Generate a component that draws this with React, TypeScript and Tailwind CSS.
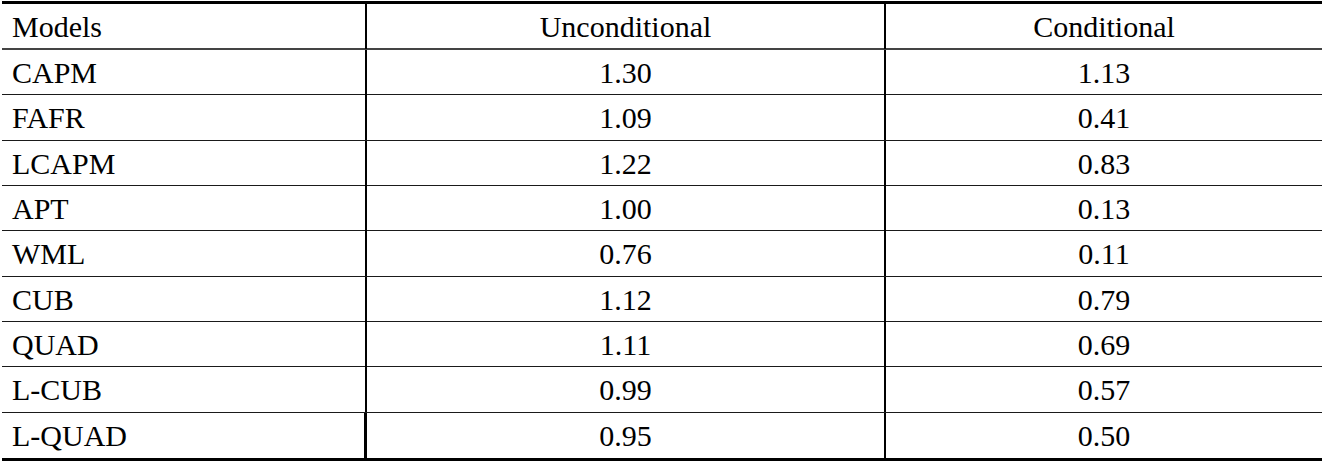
const rows: [string, string, string][] = [
  ['CAPM', '1.30', '1.13'],
  ['FAFR', '1.09', '0.41'],
  ['LCAPM', '1.22', '0.83'],
  ['APT', '1.00', '0.13'],
  ['WML', '0.76', '0.11'],
  ['CUB', '1.12', '0.79'],
  ['QUAD', '1.11', '0.69'],
  ['L-CUB', '0.99', '0.57'],
  ['L-QUAD', '0.95', '0.50'],
];

const App = () => {
  return (
    <div className="w-[1322px] h-[464px] bg-white pt-[1px] pl-[2px] font-['Liberation_Serif',serif] text-[30px] text-black">
      <div className="border-t-[3px] border-b-[3px] border-black">
        {/* header */}
        <div className="grid grid-cols-[365px_519px_1fr] h-[46px] border-b-2 border-[#444]">
          <div className="flex items-center pl-[10px] border-r-2 border-black">Models</div>
          <div className="flex items-center justify-center border-r-2 border-black">Unconditional</div>
          <div className="flex items-center justify-center">Conditional</div>
        </div>

        {rows.map(([model, uncond, cond], i) => {
          const last = i === rows.length - 1;
          return (
            <div
              key={model}
              className={
                last
                  ? 'grid grid-cols-[365px_519px_1fr] h-[45.33px]'
                  : 'grid grid-cols-[365px_519px_1fr] h-[45.33px] border-b border-[#1a1a1a]'
              }
            >
              <div
                className={
                  last
                    ? 'flex items-center pl-[10px] border-r-[3px] border-black'
                    : 'flex items-center pl-[10px] border-r-2 border-black'
                }
              >
                {model}
              </div>
              <div className="flex items-center justify-center border-r-2 border-black">{uncond}</div>
              <div className="flex items-center justify-center">{cond}</div>
            </div>
          );
        })}
      </div>
    </div>
  );
};

export default App;
